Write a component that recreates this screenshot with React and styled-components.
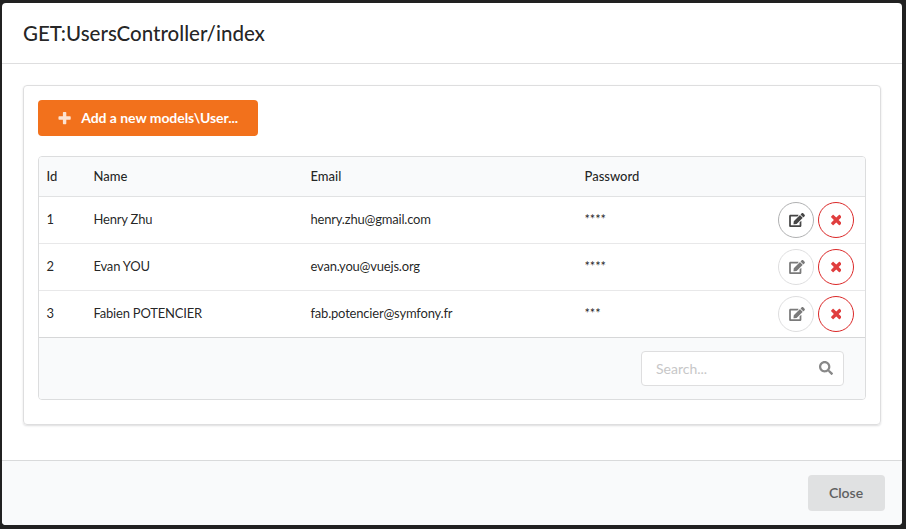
import React from "react";
import styled, { createGlobalStyle } from "styled-components";
import { FaEdit } from "react-icons/fa";

const GlobalStyle = createGlobalStyle`
  *, *::before, *::after { box-sizing: border-box; }
  body {
    margin: 0;
    background: #212121;
    font-family: Lato, "Liberation Sans", sans-serif;
    font-size: 14px;
    color: rgba(0, 0, 0, 0.87);
  }
  button, input { font-family: inherit; }
`;

const Backdrop = styled.div`
  height: 529px;
  padding: 3px 4px 4px 2px;
  overflow: hidden;
`;

const Modal = styled.section`
  display: flex;
  flex-direction: column;
  width: 900px;
  height: 522px;
  background: #fff;
  border-radius: 4px;
  overflow: hidden;
`;

const ModalHeader = styled.header`
  height: 61px;
  flex: none;
  padding: 0 21px;
  border-bottom: 1px solid #dededf;
`;

const Title = styled.h1`
  margin: 0;
  font-size: 20.5px;
  font-weight: 500;
  line-height: 60px;
`;

const ModalContent = styled.main`
  flex: 1;
  padding: 21px;
`;

const Segment = styled.div`
  height: 340px;
  padding: 14px;
  border: 1px solid #dededf;
  border-radius: 4px;
  box-shadow: 0 1px 2px rgba(34, 36, 38, 0.15);
`;

const AddButton = styled.button`
  display: flex;
  align-items: center;
  width: 220px;
  height: 36px;
  padding: 0 20px 1px;
  border: 0;
  border-radius: 4px;
  background: #f2711c;
  color: #fff;
  font-size: 14px;
  font-weight: 700;
  letter-spacing: -0.05px;
  white-space: nowrap;

  svg { margin-right: 10px; opacity: 0.8; }
`;

const Table = styled.div`
  margin-top: 20px;
  border: 1px solid #dcddde;
  border-radius: 4px;
  overflow: hidden;
`;

const Row = styled.div`
  display: grid;
  grid-template-columns: 47px 217px 274px 1fr auto;
  align-items: center;
  height: 47px;
  padding: 0 11px 0 7.5px;
  border-bottom: 1px solid ${(p) => (p.$last ? "#d6d7d8" : "#e8e8e9")};
  font-size: 13px;
  letter-spacing: -0.2px;
`;

const HeadRow = styled(Row)`
  height: 40px;
  background: #f9fafb;
  font-weight: 500;
  letter-spacing: 0;
  border-bottom-color: #e1e2e3;
`;

const Cell = styled.span`
  padding-bottom: 2px;
  white-space: nowrap;
  line-height: 18px;
`;

const Actions = styled.div`
  display: flex;
  gap: 4px;
`;

const CircleButton = styled.button`
  display: flex;
  align-items: center;
  justify-content: center;
  width: 36px;
  height: 36px;
  padding: 0;
  border-radius: 50%;
  background: #fff;
  border: 1px solid ${(p) => (p.$danger ? "#db2828" : p.$active ? "#b0b1b2" : "#dededf")};
  color: ${(p) => (p.$danger ? "#e03e3e" : p.$active ? "#464646" : "#7a7a7a")};
`;

const EditIcon = styled(FaEdit)`
  width: 16px;
  height: 14px;
  margin-left: 2px;
`;

const TableFooter = styled.div`
  display: flex;
  justify-content: flex-end;
  height: 61px;
  padding: 13px 21px;
  background: #f9fafb;
`;

const SearchBox = styled.label`
  display: flex;
  align-items: center;
  width: 203px;
  height: 35px;
  padding: 0 10px 0 14px;
  background: #fff;
  border: 1px solid #dededf;
  border-radius: 4px;

  svg { flex: none; color: #888; margin-top: -2px; }
`;

const SearchInput = styled.input`
  flex: 1;
  min-width: 0;
  padding: 0;
  border: 0;
  outline: 0;
  background: transparent;
  font-size: 14px;
  line-height: 17px;

  &::placeholder { color: #c7c7c8; }
`;

const ModalFooter = styled.footer`
  display: flex;
  justify-content: flex-end;
  flex: none;
  height: 65px;
  padding: 14px 17px;
  background: #f9fafb;
  border-top: 1px solid #d9dadb;
`;

const CloseButton = styled.button`
  width: 77px;
  height: 36px;
  padding: 0 1px 2px 0;
  border: 0;
  border-radius: 4px;
  background: #e0e1e2;
  color: #5f6061;
  font-size: 14px;
  font-weight: 600;
`;

const PlusIcon = () => (
  <svg width="14" height="14" viewBox="0 0 448 512" fill="currentColor">
    <path d="M448 294.2v-76.4c0-13.3-10.7-24-24-24H286.2V56c0-13.3-10.7-24-24-24h-76.4c-13.3 0-24 10.7-24 24v137.8H24c-13.3 0-24 10.7-24 24v76.4c0 13.3 10.7 24 24 24h137.8V456c0 13.3 10.7 24 24 24h76.4c13.3 0 24-10.7 24-24V318.2H424c13.3 0 24-10.7 24-24z" />
  </svg>
);

const RemoveIcon = () => (
  <svg width="10.5" height="14" viewBox="0 0 384 512" fill="currentColor">
    <path d="M323.1 441l53.9-53.9c9.4-9.4 9.4-24.5 0-33.8L279.8 256l97.2-97.2c9.4-9.4 9.4-24.5 0-33.8L323.1 71c-9.4-9.4-24.5-9.4-33.8 0L192 168.2 94.8 71c-9.4-9.4-24.5-9.4-33.8 0L7 124.9c-9.4 9.4-9.4 24.5 0 33.8l97.2 97.2L7 353.2c-9.4 9.4-9.4 24.5 0 33.8L60.9 441c9.4 9.4 24.5 9.4 33.8 0l97.2-97.2 97.2 97.2c9.3 9.3 24.5 9.3 33.9 0z" />
  </svg>
);

const SearchIcon = () => (
  <svg width="14" height="14" viewBox="0 0 512 512" fill="currentColor">
    <path d="M505 442.7L405.3 343c-4.500-4.500-10.600-7-17-7H372c27.600-35.300 44-79.700 44-128C416 93.100 322.900 0 208 0S0 93.100 0 208s93.100 208 208 208c48.300 0 92.700-16.400 128-44v16.300c0 6.400 2.500 12.500 7 17l99.700 99.700c9.400 9.400 24.600 9.400 33.900 0l28.300-28.300c9.400-9.400 9.400-24.600.1-34zM208 336c-70.700 0-128-57.200-128-128 0-70.700 57.200-128 128-128 70.700 0 128 57.200 128 128 0 70.700-57.200 128-128 128z" />
  </svg>
);

const users = [
  { id: 1, name: "Henry Zhu", email: "henry.zhu@gmail.com", password: "****" },
  { id: 2, name: "Evan YOU", email: "evan.you@vuejs.org", password: "****" },
  { id: 3, name: "Fabien POTENCIER", email: "fab.potencier@symfony.fr", password: "***" },
];

export default function App() {
  return (
    <Backdrop>
      <GlobalStyle />
      <Modal>
        <ModalHeader>
          <Title>GET:UsersController/index</Title>
        </ModalHeader>
        <ModalContent>
          <Segment>
            <AddButton>
              <PlusIcon />
              Add a new models\User...
            </AddButton>
            <Table>
              <HeadRow>
                <Cell>Id</Cell>
                <Cell>Name</Cell>
                <Cell>Email</Cell>
                <Cell>Password</Cell>
              </HeadRow>
              {users.map((u, i) => (
                <Row key={u.id} $last={i === users.length - 1}>
                  <Cell>{u.id}</Cell>
                  <Cell>{u.name}</Cell>
                  <Cell>{u.email}</Cell>
                  <Cell>{u.password}</Cell>
                  <Actions>
                    <CircleButton $active={i === 0} aria-label="Edit">
                      <EditIcon />
                    </CircleButton>
                    <CircleButton $danger aria-label="Delete">
                      <RemoveIcon />
                    </CircleButton>
                  </Actions>
                </Row>
              ))}
              <TableFooter>
                <SearchBox>
                  <SearchInput placeholder="Search..." />
                  <SearchIcon />
                </SearchBox>
              </TableFooter>
            </Table>
          </Segment>
        </ModalContent>
        <ModalFooter>
          <CloseButton>Close</CloseButton>
        </ModalFooter>
      </Modal>
    </Backdrop>
  );
}
